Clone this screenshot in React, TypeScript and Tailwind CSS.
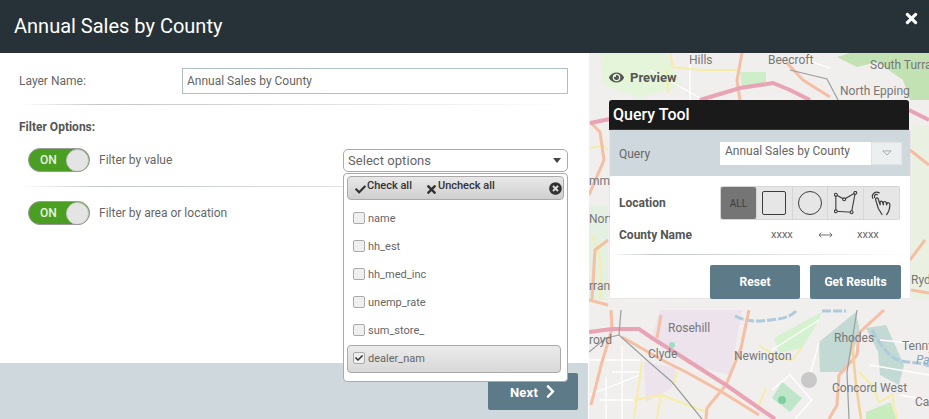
import { FaCheck, FaChevronRight, FaEye, FaTimes, FaTimesCircle } from "react-icons/fa";

const options = [
  { name: "name", checked: false },
  { name: "hh_est", checked: false },
  { name: "hh_med_inc", checked: false },
  { name: "unemp_rate", checked: false },
  { name: "sum_store_", checked: false },
  { name: "dealer_nam", checked: true },
];

const mapLabels = [
  { text: "Hills", x: 100, y: 0 },
  { text: "Beecroft", x: 179, y: 0 },
  { text: "South Turra", x: 281, y: 5 },
  { text: "North Epping", x: 251, y: 31 },
  { text: "Rosehill", x: 79, y: 268 },
  { text: "Rhodes", x: 245, y: 278 },
  { text: "Clyde", x: 59, y: 294 },
  { text: "Newington", x: 145, y: 296 },
  { text: "Tenny", x: 313, y: 286 },
  { text: "Concord West", x: 243, y: 328 },
  { text: "Ryd", x: 322, y: 220 },
  { text: "Ca", x: 326, y: 342 },
  { text: "royd", x: 0, y: 280 },
  { text: "rran", x: 0, y: 226 },
  { text: "Nort", x: 0, y: 159 },
  { text: "mme", x: 0, y: 121 },
];

function Toggle() {
  return (
    <div className="w-[62px] h-[24px] rounded-full bg-[#4a9e22] border border-[#9a9a9a] flex items-center justify-between pl-[11px] shrink-0 overflow-hidden">
      <span className="text-[12px] font-medium text-[#e8f2e0]">ON</span>
      <span className="w-[23px] h-[23px] rounded-full bg-[#e4e4e4] border border-[#c4c4c4]" />
    </div>
  );
}

function FadeRule() {
  return <div className="h-px bg-gradient-to-r from-transparent via-[#c2c6c9] via-15% to-transparent" />;
}

function MapBackground() {
  return (
    <svg viewBox="589 53 340 366" className="absolute inset-0 w-full h-full">
      <rect x="589" y="53" width="340" height="366" fill="#f1eeee" />
      {/* parks */}
      <path d="M837 57 L850 53 L929 53 L929 100 L910 100 L903 80 L877 62 L857 67Z" fill="#c3e2b4" />
      <path d="M740 72 L766 72 L766 87 L742 87Z" fill="#cdeec8" />
      <path d="M600 53 L665 53 L682 85 L640 98 L604 85Z" fill="#e4f5da" />
      <path d="M660 310 L742 310 L730 375 L690 365 L652 338Z" fill="#ece3ed" />
      <path d="M644 362 L676 368 L672 388 L646 402Z" fill="#ece3ed" />
      <path d="M774 338 L822 312 L816 325 L802 348 L779 353Z" fill="#d4f2cf" />
      <path d="M819 342 L856 312 L860 332 L845 372 L820 372Z" fill="#c3d9d4" />
      <path d="M866 328 L886 325 L904 365 L899 385 L880 375 L878 352Z" fill="#c3d9d4" />
      <path d="M866 412 L891 402 L896 419 L866 419Z" fill="#c8ecbe" />
      <path d="M782 382 L802 398 L790 412 L772 398Z" fill="#bfe6c8" />
      <path d="M912 125 L929 125 L929 300 L912 300Z" fill="#eaf1e3" />
      <path d="M589 205 L608 205 L608 300 L589 300Z" fill="#e4f0e2" />
      {/* water */}
      <path d="M735 316 C745 321 755 322 770 320 C780 319 790 318 797 310 M822 311 L846 311 M872 330 C880 345 885 350 890 355 C900 365 915 360 929 366" fill="none" stroke="#aecbdd" strokeWidth="3" strokeDasharray="9 2" />
      {/* streets */}
      <g fill="none" stroke="#ffffff" strokeWidth="1.3">
        <path d="M589 360 L640 360 M606 377 L606 419 M589 395 L640 375 M612 372 L640 372 M622 345 L622 419 M600 400 L634 400" />
        <path d="M772 390 L790 375 L812 400 L795 419 M772 350 L819 320 M810 375 L819 342" />
        <path d="M880 340 L929 345 M900 395 L929 400 M870 365 L929 375" />
        <path d="M690 53 L690 100 M800 58 L830 68 M650 70 L700 98" />
      </g>
      {/* yellow */}
      <g fill="none" stroke="#f5eda8" strokeWidth="2">
        <path d="M670 53 L673 67 L700 70 L737 70 M667 70 L668 93" />
        <path d="M590 148 L603 146 L608 150" />
        <path d="M592 235 C600 250 603 270 600 300" />
        <path d="M642 362 L634 418 M634 400 L661 395 L657 419 M661 395 L706 412 M677 372 L674 385" />
        <path d="M759 345 L779 358 L792 360 L802 348 M766 388 L759 405" />
        <path d="M859 372 L872 385 L879 402 L892 395 L897 419" />
      </g>
      {/* orange roads */}
      <g fill="none" stroke="#f5bfa4" strokeWidth="3">
        <path d="M742 53 L737 80 L740 100" />
        <path d="M787 63 L803 80 L830 97" />
        <path d="M590 122 L600 132 L604 160 L589 195" />
        <path d="M749 310 L741 348 L726 385 L707 408 L706 419" />
        <path d="M622 337 L662 360 L686 372 L722 392 L759 415" />
        <path d="M611 310 L612 329 L602 362 L591 405" />
        <path d="M661 315 L657 338" />
        <path d="M884 310 L859 333 L857 355 L839 375 L837 405 L829 419" />
        <path d="M608 240 L595 250 L592 300 M589 300 L608 305" />
        <path d="M910 260 L925 240 M929 293 L911 290 M910 150 L929 165" />
      </g>
      <path d="M852 342 L856 385 L861 419" fill="none" stroke="#f4cf9a" strokeWidth="2.5" />
      {/* motorways */}
      <g fill="none" stroke="#e8a4b4" strokeWidth="4">
        <path d="M700 100 L740 88 L773 83 L790 90 L810 100" />
        <path d="M590 123 L610 119" />
        <path d="M909 110 L929 120" />
        <path d="M589 332 L612 329 L639 329 L652 338 L679 355 L726 385 L759 408 L775 419" />
      </g>
      {/* rail */}
      <g fill="none" stroke="#9a9f9f" strokeWidth="1.2">
        <path d="M790 70 L827 79 L838 100" />
        <path d="M621 310 L619 335 L649 362 L672 382 L702 419 M589 352 L606 338 L619 335" />
        <path d="M857 310 L847 372 L849 419" />
      </g>
      {/* stadium */}
      <circle cx="809" cy="380" r="8" fill="#c9c9c9" />
      <circle cx="782" cy="400" r="4" fill="#7fcfa3" />
      <circle cx="672" cy="345" r="3" fill="#9fdcc0" />
    </svg>
  );
}

function HandIcon() {
  return (
    <svg viewBox="0 0 26 28" className="w-[24px] h-[26px]" fill="none" stroke="#3c3c3c" strokeWidth="1.3" strokeLinecap="round" strokeLinejoin="round">
      <path d="M3 9 C1 4 6 1 10 3 M5 8 C4 6 6 4 8 5" />
      <path d="M6 10 C6 8 9 8 9 10 L11 16 L11 13 C11 11.5 13.5 11.5 13.5 13 L14.5 16 L14.5 13.5 C14.5 12 17 12 17.5 13.5 L18 16 L18.5 14.5 C19 13 21.5 13.5 21.5 15.5 C21.5 20 20 24 18 26.5" />
      <path d="M6 10 L9 20 L13 26.5" />
    </svg>
  );
}

export default function App() {
  return (
    <div className="w-[929px] h-[419px] overflow-hidden flex flex-col bg-white font-['Roboto',sans-serif] text-[#666]">
      <header className="h-[53px] shrink-0 bg-[#263238] flex justify-between pl-[14px] pr-[9px] text-white">
        <h1 className="text-[20px] leading-[53px]">Annual Sales by County</h1>
        <FaTimes className="mt-[10px] text-[17px]" />
      </header>

      <div className="flex-1 flex min-h-0">
        <div className="relative w-[588px] shrink-0 flex flex-col">
          <div className="h-[310px] bg-white pl-[19px] pr-[20px] pt-[15px]">
            <div className="flex items-center h-[26px]">
              <label className="w-[163px] shrink-0 text-[12px]">Layer Name:</label>
              <div className="w-[386px] h-[26px] border border-[#b0bec5] px-[4px] text-[12px] leading-[24px]">Annual Sales by County</div>
            </div>
            <div className="mt-[10px]"><FadeRule /></div>
            <p className="mt-[15px] text-[12px] leading-[14px] font-bold text-[#555]">Filter Options:</p>
            <div className="mt-[14px] pl-[9px] flex items-center gap-[9px]">
              <Toggle />
              <span className="text-[12px]">Filter by value</span>
            </div>
            <div className="mt-[14px] -mr-[20px]"><FadeRule /></div>
            <div className="mt-[14px] pl-[9px] flex items-center gap-[9px]">
              <Toggle />
              <span className="text-[12px]">Filter by area or location</span>
            </div>
          </div>
          <div className="flex-1 bg-[#cfd8dc] flex justify-end items-start pr-[10px] pt-[10px]">
            <button className="w-[90px] h-[37px] pt-[2px] pl-[2px] bg-[#5d7a88] rounded-[2px] text-white text-[13px] tracking-[0.2px] font-bold flex items-center justify-center gap-[5px]">
              Next <FaChevronRight className="text-[15px] -mt-[2px]" />
            </button>
          </div>

          {/* multiselect dropdown */}
          <div className="absolute left-[343px] top-[96px] w-[225px]">
            <div className="h-[23px] bg-white border border-[#aaa] rounded-[5px] pl-[4px] pr-[6px] flex items-center justify-between text-[13px] tracking-[0.05px] leading-none text-[#666]">
              <span>Select options</span>
              <span className="w-0 h-0 border-x-[4px] border-x-transparent border-t-[5px] border-t-[#444]" />
            </div>
            <div className="mt-px h-[209px] bg-white border border-[#aaa] rounded-[4px] px-[3px] pt-[2px]">
              <div className="h-[24px] border border-[#aaa] rounded-[4px] bg-gradient-to-b from-[#e8e8e8] to-[#cfcfcf] flex items-center pl-[7px] pr-[1px] text-[11px] font-medium text-[#333]">
                <FaCheck className="text-[11px] mt-[3px]" />
                <span className="ml-px mb-[3px]">Check all</span>
                <FaTimes className="ml-[13px] text-[13px] mt-[3px]" />
                <span className="mb-[3px]">Uncheck all</span>
                <FaTimesCircle className="ml-auto text-[13px]" />
              </div>
              <ul className="mt-[5px]">
                {options.map((o) => (
                  <li
                    key={o.name}
                    className={`h-[28px] flex items-center text-[11px] ${
                      o.checked
                        ? "border border-[#aaa] rounded-[4px] bg-gradient-to-b from-[#ebebeb] to-[#d8d8d8] w-[214px] pl-[5px]"
                        : "pl-[6px]"
                    }`}
                  >
                    <span className="w-[12px] h-[12px] border border-[#aaa] rounded-[2px] bg-[#efefef] flex items-center justify-center mr-[3px] -mt-[3px]">
                      {o.checked && <FaCheck className="text-[8px] text-[#333]" />}
                    </span>
                    {o.name}
                  </li>
                ))}
              </ul>
            </div>
          </div>
        </div>

        <div className="relative flex-1 ml-px overflow-hidden">
          <MapBackground />
          {mapLabels.map((l) => (
            <span
              key={l.text}
              className="absolute text-[12px] leading-[14px] text-[#777] whitespace-nowrap"
              style={{ left: l.x, top: l.y }}
            >
              {l.text}
            </span>
          ))}
          <span className="absolute left-[327px] top-[300px] text-[12px] leading-[14px] italic text-[#7fa6c4]">Pa</span>
          <div className="absolute left-[20px] top-[15px] flex items-center gap-[6px] text-[13px] font-bold text-[#555]">
            <FaEye className="text-[15px]" />
            Preview
          </div>

          {/* query tool panel */}
          <div className="absolute left-[20px] top-[47px] w-[301px]">
            <div className="w-[300px] h-[30px] bg-[#1a1a1a] rounded-t-[3px] text-white text-[16px] font-medium leading-[30px] pl-[4px]">Query Tool</div>
            <div className="ml-px w-[300px] shadow-[0_0_1px_#bbb]">
              <div className="h-[46px] bg-[#cfd8dc] flex items-center pl-[9px] pr-[8px] text-[12px]">
                <span className="w-[101px] mt-[2px]">Query</span>
                <div className="flex-1 h-[23px] bg-white flex">
                  <span className="flex-1 pl-[5px] text-[12px] leading-[18px]">Annual Sales by County</span>
                  <span className="w-[31px] bg-[#eceff0] border border-[#dfe3e5] flex items-center justify-center">
                    <svg viewBox="0 0 12 7" className="w-[10px] h-[6px]" fill="none" stroke="#9aa0a4"><path d="M1 1 H11 L6 6Z" /></svg>
                  </span>
                </div>
              </div>
              <div className="bg-white h-[122px] pl-[9px] pr-[10px] pt-[10px]">
                <div className="flex items-center justify-between">
                  <span className="text-[12px] font-bold text-[#555]">Location</span>
                  <div className="h-[34px] w-[180px] grid grid-cols-5 bg-[#d6d6d6] p-px gap-px rounded-[2px]">
                    <div className="bg-[#757575] text-[#3c3c3c] text-[10px] flex items-center justify-center rounded-[2px]">ALL</div>
                    <div className="bg-[#e6e6e6] flex items-center justify-center">
                      <span className="w-[24px] h-[24px] border-[1.5px] border-[#3c3c3c] rounded-[2px]" />
                    </div>
                    <div className="bg-[#e6e6e6] flex items-center justify-center">
                      <span className="w-[24px] h-[24px] border-[1.5px] border-[#3c3c3c] rounded-full" />
                    </div>
                    <div className="bg-[#e6e6e6] flex items-center justify-center">
                      <svg viewBox="0 0 26 26" className="w-[24px] h-[24px]" fill="#e6e6e6" stroke="#3c3c3c" strokeWidth="1.2">
                        <path d="M2 4 L11 9 L23 2 L19 23 L2 22Z" fill="none" />
                        <circle cx="2" cy="4" r="1.6" />
                        <circle cx="11" cy="9" r="1.6" />
                        <circle cx="23" cy="2" r="1.6" />
                        <circle cx="19" cy="23" r="1.6" />
                        <circle cx="2" cy="22" r="1.6" />
                      </svg>
                    </div>
                    <div className="bg-[#e6e6e6] flex items-center justify-center">
                      <HandIcon />
                    </div>
                  </div>
                </div>
                <div className="flex items-center mt-[5px] h-[20px] text-[11px]">
                  <span className="w-[152px] text-[12px] font-bold text-[#555]">County Name</span>
                  <span className="w-[24px]">xxxx</span>
                  <svg viewBox="0 0 16 8" className="w-[15px] h-[8px] ml-[23px]" fill="none" stroke="#666"><path d="M1 4 H15 M3.5 1.5 L1 4 L3.5 6.5 M12.5 1.5 L15 4 L12.5 6.5" /></svg>
                  <span className="ml-[24px]">xxxx</span>
                </div>
                <div className="-ml-[9px] -mr-[10px] mt-[9px]"><FadeRule /></div>
                <div className="flex justify-end gap-[10px] mt-[10px] -mr-px">
                  <button className="w-[90px] h-[34px] bg-[#5d7a88] rounded-[2px] text-white text-[12px] font-bold">Reset</button>
                  <button className="w-[91px] h-[34px] bg-[#5d7a88] rounded-[2px] text-white text-[12px] font-bold">Get Results</button>
                </div>
              </div>
            </div>
          </div>
        </div>
      </div>
    </div>
  );
}
